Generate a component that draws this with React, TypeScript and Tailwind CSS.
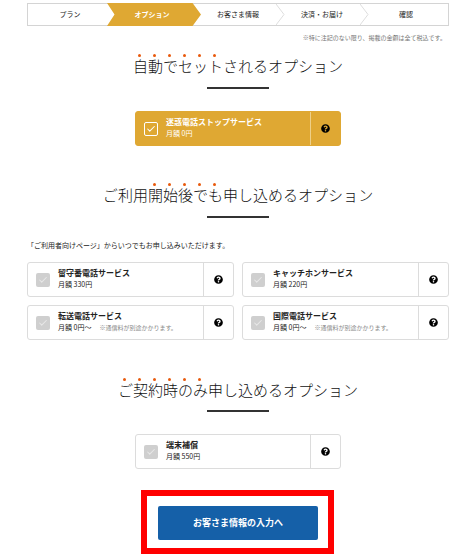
import { Check } from 'lucide-react';
import { FaQuestionCircle } from 'react-icons/fa';

const STEPS = ['プラン', 'オプション', 'お客さま情報', '決済・お届け', '確認'];

function Heading({ text, dotFrom, dotCount }: { text: string; dotFrom: number; dotCount: number }) {
  return (
    <h2 className="text-center text-[15px] leading-[20px] font-light text-[#111]">
      {Array.from(text).map((ch, i) => (
        <span key={i} className="relative">
          {i >= dotFrom && i < dotFrom + dotCount && (
            <span className="absolute left-[5px] top-[-1px] w-[3px] h-[3px] rounded-full bg-[#e8590c]" />
          )}
          {ch}
        </span>
      ))}
    </h2>
  );
}

function Divider() {
  return <div className="mx-auto w-[62px] h-[2px] bg-[#333]" />;
}

interface OptionCardProps {
  name: string;
  price: string;
  note?: string;
  active?: boolean;
}

function OptionCard({ name, price, note, active }: OptionCardProps) {
  return (
    <div
      className={
        active
          ? 'flex h-[35px] rounded-[3px] border border-[#dfa833] bg-[#dfa833] text-white'
          : 'flex h-[35px] rounded-[3px] border border-[#dcdcdc] bg-white text-[#222]'
      }
    >
      <div className="flex flex-1 items-center pl-[8px]">
        <div
          className={
            active
              ? 'flex w-[14px] h-[14px] items-center justify-center rounded-[2px] border border-white'
              : 'flex w-[14px] h-[14px] items-center justify-center rounded-[2px] bg-[#cfcfcf]'
          }
        >
          <Check size={10} strokeWidth={2.5} className={active ? 'text-white' : 'text-[#e8e8e8]'} />
        </div>
        <div className="ml-[8px] mb-[3px]">
          <p className="text-[8px] leading-[12px] font-bold">{name}</p>
          <p className="text-[7px] leading-[11px]">
            {price}
            {note && <span className="ml-[8px] text-[6px] text-[#888]">{note}</span>}
          </p>
        </div>
      </div>
      <div
        className={
          active
            ? 'flex w-[30px] items-center justify-center border-l border-[#eed08a]'
            : 'flex w-[30px] items-center justify-center border-l border-[#dcdcdc]'
        }
      >
        <FaQuestionCircle size={9} className="text-black" />
      </div>
    </div>
  );
}

export default function App() {
  return (
    <div
      className="relative w-[476px] h-[560px] overflow-hidden bg-white pt-[3px] text-[#222]"
      style={{ fontFamily: '"Noto Sans CJK JP", "Noto Sans", sans-serif' }}
    >
      <div className="mx-[27px] flex h-[23px] border border-[#d4d4d4]">
        {STEPS.map((step, i) => (
          <div key={step} className="relative flex flex-1 items-center justify-center text-[7px]">
            {i === 1 && (
              <div className="absolute inset-y-[-1px] left-[-5px] right-[-5px] bg-[#dfa833] [clip-path:polygon(0_0,91%_0,100%_50%,91%_100%,0_100%,8%_50%)]" />
            )}
            {(i === 2 || i === 3) && (
              <svg className="absolute right-[-5px] top-0 h-full w-[9px] z-10" viewBox="0 0 9 21" fill="none">
                <path d="M0 0 L8 10.5 L0 21" stroke="#dedede" strokeWidth="1" />
              </svg>
            )}
            <span className={i === 1 ? 'relative right-[2px] font-bold text-white' : 'relative'}>{step}</span>
          </div>
        ))}
      </div>

      <p className="mt-[7px] mr-[30px] text-right text-[6px] leading-[9px] text-[#777]">
        ※特に注記のない限り、掲載の金額は全て税込です。
      </p>

      <div className="mt-[14px]">
        <Heading text="自動でセットされるオプション" dotFrom={0} dotCount={6} />
      </div>
      <div className="mt-[11px]">
        <Divider />
      </div>
      <div className="mx-auto mt-[22px] w-[206px]">
        <OptionCard active name="迷惑電話ストップサービス" price="月額 0円" />
      </div>

      <div className="mt-[39px]">
        <Heading text="ご利用開始後でも申し込めるオプション" dotFrom={3} dotCount={5} />
      </div>
      <div className="mt-[11px]">
        <Divider />
      </div>
      <p className="mx-[27px] mt-[21px] text-[7px] leading-[12px]">「ご利用者向けページ」からいつでもお申し込みいただけます。</p>
      <div className="mx-[27px] mt-[11px] grid grid-cols-2 gap-x-[8px] gap-y-[8px]">
        <OptionCard name="留守番電話サービス" price="月額 330円" />
        <OptionCard name="キャッチホンサービス" price="月額 220円" />
        <OptionCard name="転送電話サービス" price="月額 0円〜" note="※通信料が別途かかります。" />
        <OptionCard name="国際電話サービス" price="月額 0円〜" note="※通信料が別途かかります。" />
      </div>

      <div className="mt-[40px]">
        <Heading text="ご契約時のみ申し込めるオプション" dotFrom={0} dotCount={6} />
      </div>
      <div className="mt-[10px]">
        <Divider />
      </div>
      <div className="mx-auto mt-[22px] w-[206px]">
        <OptionCard name="端末補償" price="月額 550円" />
      </div>

      <div className="relative mx-auto mt-[37px] w-[160px]">
        <button className="flex h-[34px] w-full items-center justify-center rounded-[2px] bg-[#1560a8] text-[9px] font-bold text-white">
          お客さま情報の入力へ
        </button>
        <div className="absolute left-[-17px] right-[-16px] top-[-16px] bottom-[-14px] border-[6px] border-[#ff0000]" />
      </div>
    </div>
  );
}
